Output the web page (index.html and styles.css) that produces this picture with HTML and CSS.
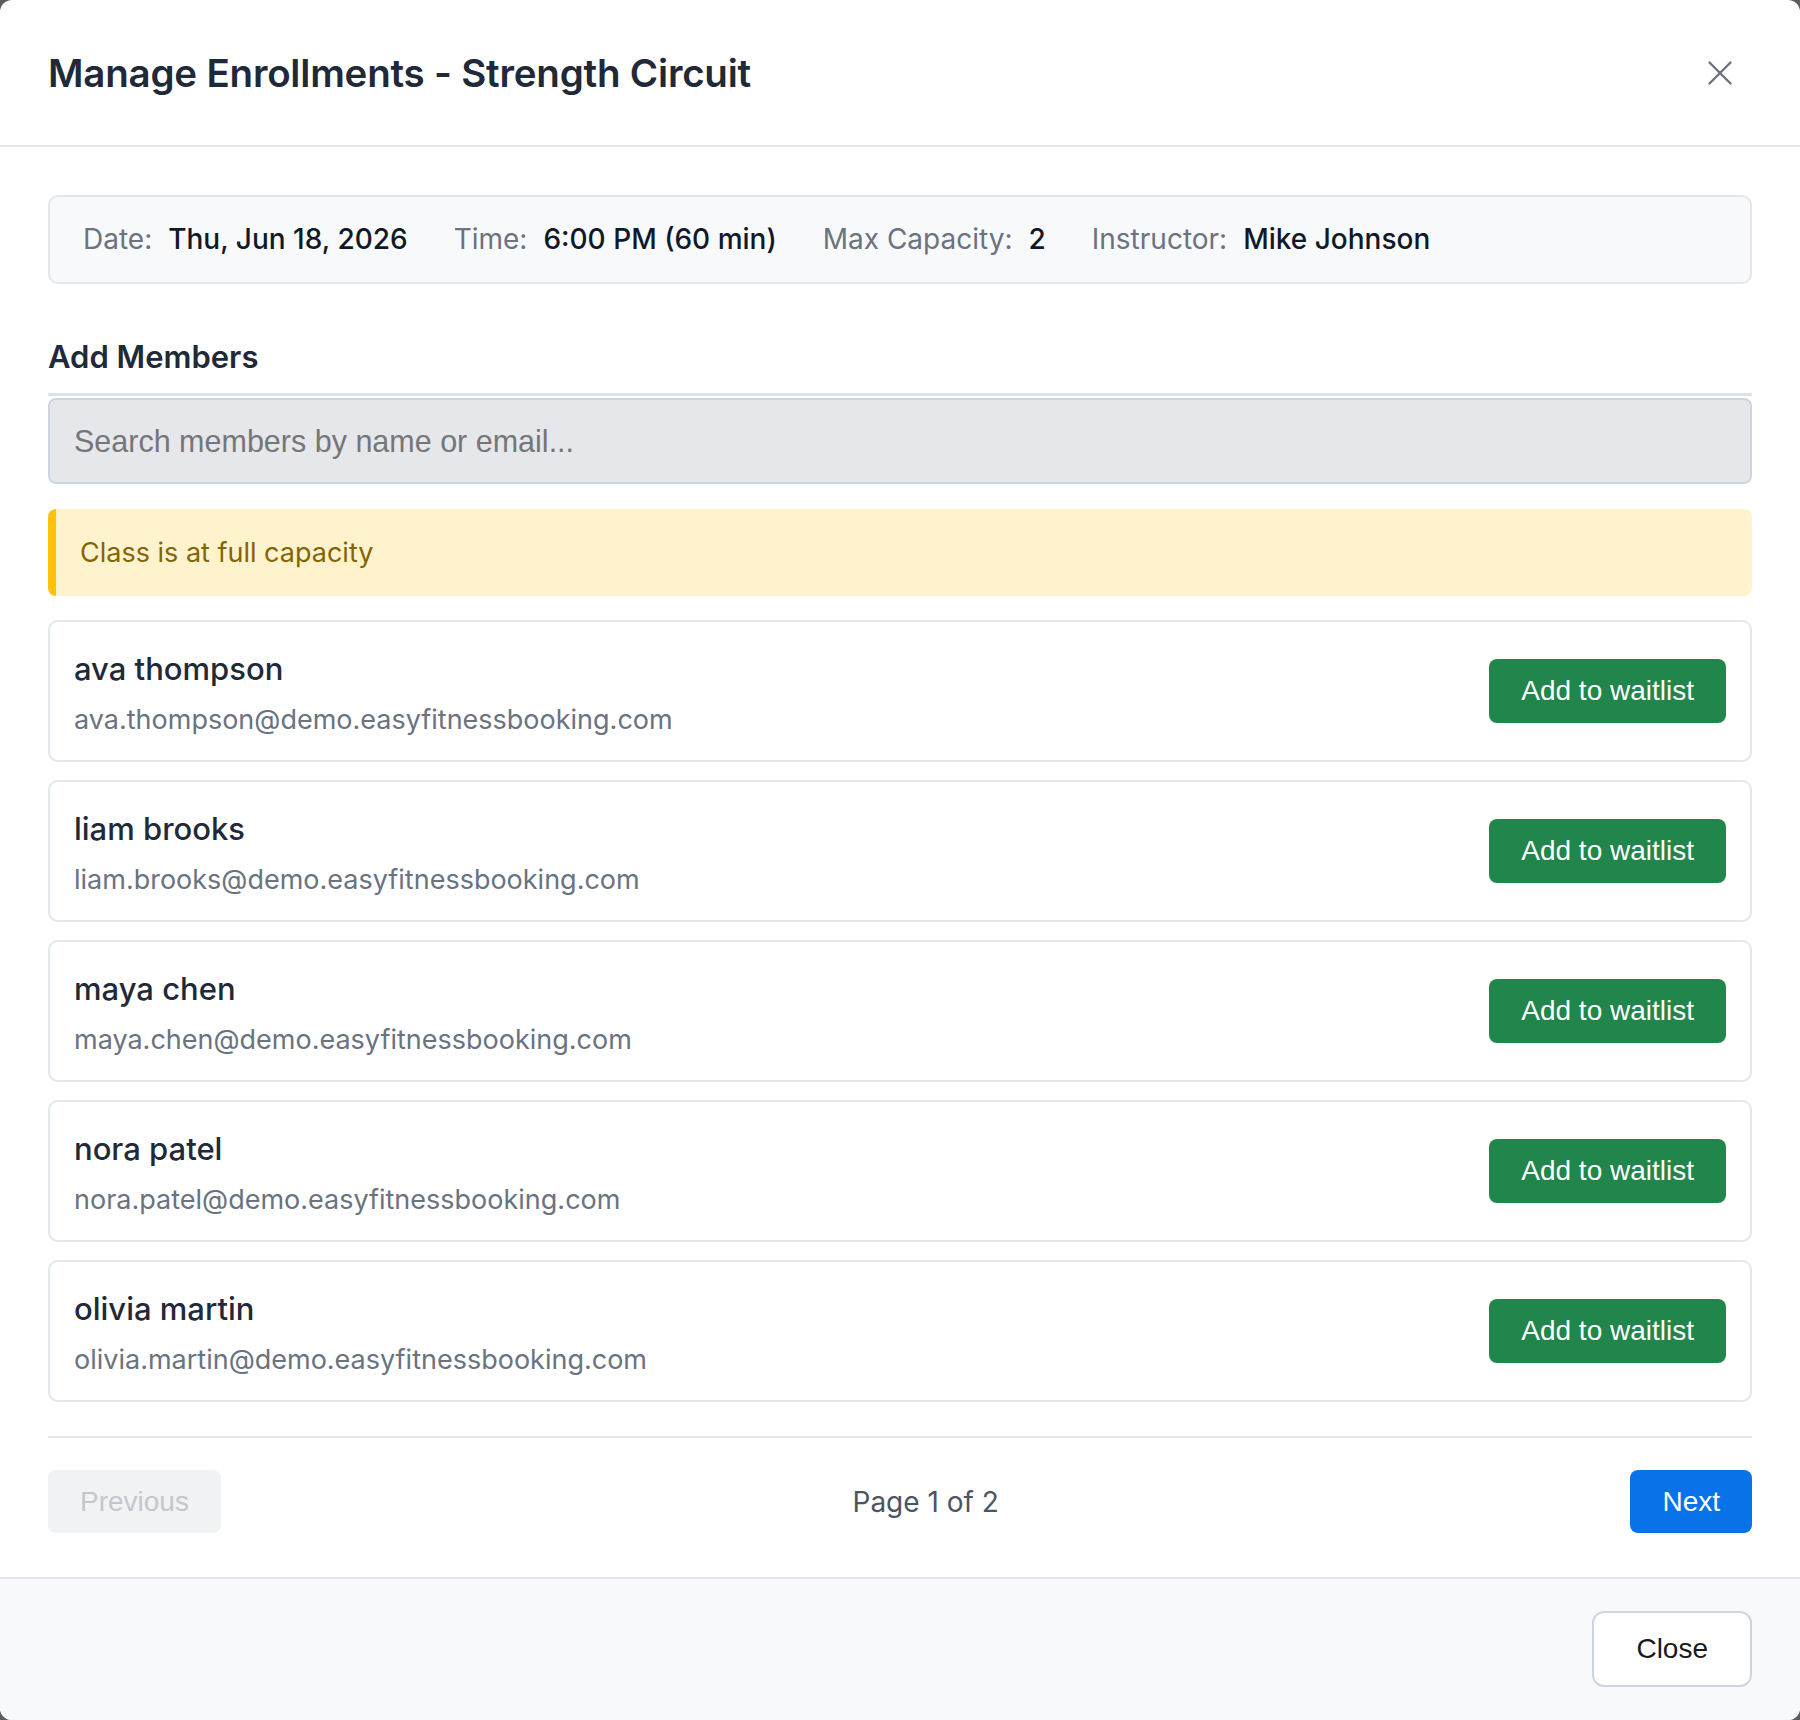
FILE: index.html
```html
<!DOCTYPE html>
<html lang="en">
<head>
  <meta charset="UTF-8" />
  <meta name="viewport" content="width=device-width, initial-scale=1.0" />
  <title>Manage Enrollments</title>
  <link rel="stylesheet" href="styles.css">
</head>
<body>

  <!-- ==== ENROLLMENT MODAL ==== -->
  <div class="modal" role="dialog" aria-labelledby="modal-title">

    <header class="modal-header">
      <h1 id="modal-title" class="modal-title">Manage Enrollments - Strength Circuit</h1>
      <button class="icon-btn" aria-label="Close">
        <svg width="24" height="24" viewBox="0 0 24 24" fill="none" stroke="currentColor" stroke-width="2.4" stroke-linecap="round">
          <line x1="1.5" y1="1.5" x2="22.5" y2="22.5" />
          <line x1="22.5" y1="1.5" x2="1.5" y2="22.5" />
        </svg>
      </button>
    </header>

    <div class="modal-body">
      <div class="class-info">
        <div class="info-item"><span class="info-label">Date:</span><span class="info-value">Thu, Jun 18, 2026</span></div>
        <div class="info-item"><span class="info-label">Time:</span><span class="info-value">6:00 PM (60 min)</span></div>
        <div class="info-item"><span class="info-label">Max Capacity:</span><span class="info-value">2</span></div>
        <div class="info-item"><span class="info-label">Instructor:</span><span class="info-value">Mike Johnson</span></div>
      </div>

      <h2 class="section-title">Add Members</h2>
      <div class="search-wrap">
        <input class="search-input" type="text" placeholder="Search members by name or email..." />
      </div>

      <div class="alert-warning">Class is at full capacity</div>

      <ul class="member-list">
        <li class="member-card">
          <div>
            <p class="member-name">ava thompson</p>
            <p class="member-email">ava.thompson@demo.easyfitnessbooking.com</p>
          </div>
          <button class="btn btn-success">Add to waitlist</button>
        </li>
        <li class="member-card">
          <div>
            <p class="member-name">liam brooks</p>
            <p class="member-email">liam.brooks@demo.easyfitnessbooking.com</p>
          </div>
          <button class="btn btn-success">Add to waitlist</button>
        </li>
        <li class="member-card">
          <div>
            <p class="member-name">maya chen</p>
            <p class="member-email">maya.chen@demo.easyfitnessbooking.com</p>
          </div>
          <button class="btn btn-success">Add to waitlist</button>
        </li>
        <li class="member-card">
          <div>
            <p class="member-name">nora patel</p>
            <p class="member-email">nora.patel@demo.easyfitnessbooking.com</p>
          </div>
          <button class="btn btn-success">Add to waitlist</button>
        </li>
        <li class="member-card">
          <div>
            <p class="member-name">olivia martin</p>
            <p class="member-email">olivia.martin@demo.easyfitnessbooking.com</p>
          </div>
          <button class="btn btn-success">Add to waitlist</button>
        </li>
      </ul>

      <div class="pager">
        <button class="btn btn-disabled" disabled>Previous</button>
        <span class="pager-info">Page 1 of 2</span>
        <button class="btn btn-primary">Next</button>
      </div>
    </div>

    <footer class="modal-footer">
      <button class="btn btn-outline">Close</button>
    </footer>
  </div>

</body>
</html>
```

FILE: styles.css
```css
:root {
  --clr-backdrop: #5c5c5c;
  --clr-card: #fff;
  --clr-title: #1f2937;
  --clr-text: #111827;
  --clr-muted: #6b7280;
  --clr-border: #e3e6eb;
  --clr-success: #20864b;
  --clr-primary: #0a72e8;
}

* { box-sizing: border-box; margin: 0; padding: 0; }
body {
  font-family: "Inter", "Noto Sans", sans-serif;
  background: var(--clr-backdrop);
  color: var(--clr-text);
}

.modal {
  width: 1800px;
  min-height: 100vh;
  background: var(--clr-card);
  border-radius: 12px;
  overflow: hidden;
  display: flex;
  flex-direction: column;
}

/* ---------- header ---------- */
.modal-header {
  height: 147px;
  padding: 0 48px;
  border-bottom: 2px solid var(--clr-border);
  display: flex;
  align-items: center;
  justify-content: space-between;
}
.modal-title {
  font-size: 38.5px;
  font-weight: 600;
  color: var(--clr-title);
  letter-spacing: -0.2px;
}
.icon-btn {
  width: 64px; height: 64px;
  border: none; background: transparent;
  color: #6b7280;
  display: flex; align-items: center; justify-content: center;
  cursor: pointer;
}

/* ---------- body ---------- */
.modal-body {
  flex: 1;
  padding: 48px 48px 44px;
}

.class-info {
  display: flex;
  gap: 46px;
  padding: 22px 33px;
  background: #f8f9fb;
  border: 2px solid var(--clr-border);
  border-radius: 10px;
  font-size: 28px;
  line-height: 41px;
}
.info-item { display: flex; gap: 16px; }
.info-label { color: var(--clr-muted); }
.info-value { color: var(--clr-text); font-weight: 500; }

.section-title {
  margin-top: 50px;
  font-size: 31px;
  line-height: 45px;
  font-weight: 600;
  color: var(--clr-title);
}

.search-wrap {
  margin-top: 14px;
  padding-top: 2px;
  border-top: 3px solid #dde3ea;
}
.search-input {
  width: 100%;
  height: 86px;
  padding: 0 24px;
  background: #e5e7eb;
  border: 2px solid #cdd5e0;
  border-radius: 8px;
  font-family: "Liberation Sans", Arial, sans-serif;
  font-size: 30.5px;
  color: var(--clr-text);
}
.search-input::placeholder { color: #767676; }

.alert-warning {
  margin-top: 25px;
  padding: 0 24px;
  line-height: 87px;
  background: #fff3cd;
  color: #856404;
  border-left: 8px solid #ffc107;
  border-radius: 8px;
  font-size: 27px;
}

/* ---------- member rows ---------- */
.member-list {
  list-style: none;
  margin-top: 24px;
  display: flex;
  flex-direction: column;
  gap: 18px;
}
.member-card {
  display: flex;
  align-items: center;
  justify-content: space-between;
  padding: 22px 24px;
  border: 2px solid var(--clr-border);
  border-radius: 10px;
}
.member-name {
  font-size: 31px;
  line-height: 49px;
  font-weight: 500;
  color: var(--clr-title);
}
.member-email {
  margin-top: 9px;
  font-size: 27px;
  line-height: 36px;
  color: var(--clr-muted);
}

/* ---------- buttons ---------- */
.btn {
  font-family: "Liberation Sans", Arial, sans-serif;
  font-size: 28px;
  border: none;
  border-radius: 8px;
  padding: 0 32px;
  cursor: pointer;
}
.btn-success { height: 64px; background: var(--clr-success); color: #fff; }
.btn-primary { height: 63px; background: var(--clr-primary); color: #fff; }
.btn-disabled { height: 63px; background: #f1f2f4; color: #c3c7cd; cursor: default; }
.btn-outline {
  height: 76px;
  padding: 0 42px;
  background: #fff;
  color: #1a1a1a;
  border: 2px solid #cdd5e0;
  border-radius: 12px;
}

/* ---------- pagination ---------- */
.pager {
  margin-top: 34px;
  padding-top: 32px;
  border-top: 2px solid var(--clr-border);
  display: flex;
  align-items: center;
  justify-content: space-between;
}
.pager-info { font-size: 28px; color: #4b5563; }

/* ---------- footer ---------- */
.modal-footer {
  padding: 32px 48px 33px;
  background: #f8f9fa;
  border-top: 2px solid var(--clr-border);
  display: flex;
  justify-content: flex-end;
}
```
